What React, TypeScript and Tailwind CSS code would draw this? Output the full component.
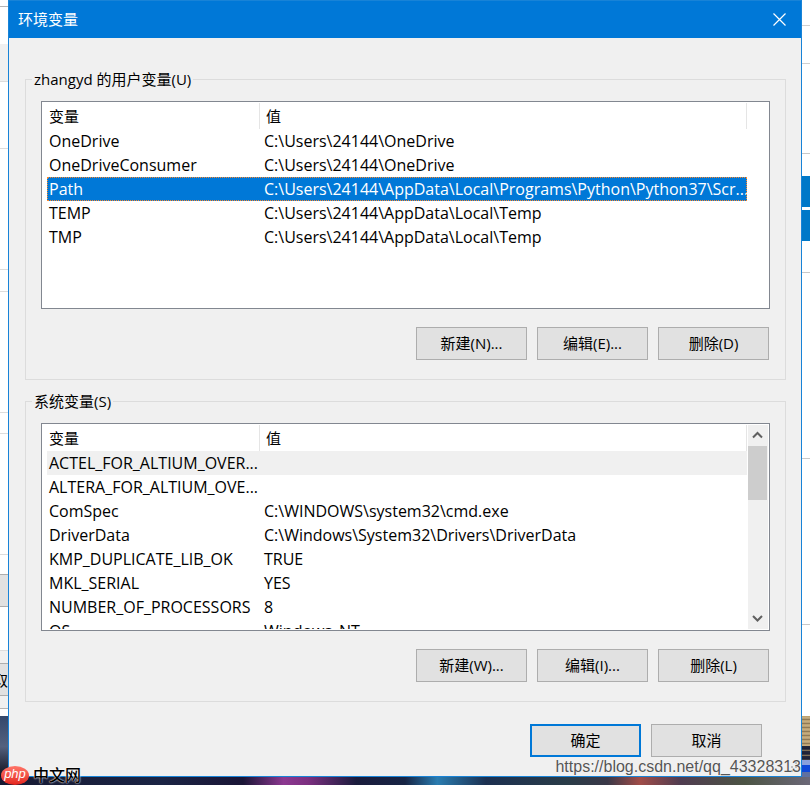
import React from 'react';

interface Variable {
  name: string;
  value: string;
}

interface VariableTableProps {
  label: string;
  variables: Variable[];
  focused?: string;
  inactive?: string;
  scrollable?: boolean;
}

const userVariables: Variable[] = [
  { name: 'OneDrive', value: 'C:\\Users\\24144\\OneDrive' },
  { name: 'OneDriveConsumer', value: 'C:\\Users\\24144\\OneDrive' },
  { name: 'Path', value: 'C:\\Users\\24144\\AppData\\Local\\Programs\\Python\\Python37\\Scr...' },
  { name: 'TEMP', value: 'C:\\Users\\24144\\AppData\\Local\\Temp' },
  { name: 'TMP', value: 'C:\\Users\\24144\\AppData\\Local\\Temp' },
];

const systemVariables: Variable[] = [
  { name: 'ACTEL_FOR_ALTIUM_OVER...', value: '' },
  { name: 'ALTERA_FOR_ALTIUM_OVE...', value: '' },
  { name: 'ComSpec', value: 'C:\\WINDOWS\\system32\\cmd.exe' },
  { name: 'DriverData', value: 'C:\\Windows\\System32\\Drivers\\DriverData' },
  { name: 'KMP_DUPLICATE_LIB_OK', value: 'TRUE' },
  { name: 'MKL_SERIAL', value: 'YES' },
  { name: 'NUMBER_OF_PROCESSORS', value: '8' },
  { name: 'OS', value: 'Windows_NT' },
];

function Scrollbar() {
  return (
    <div className="flex w-5 shrink-0 flex-col bg-[#f0f0f0]">
      <button type="button" aria-label="向上滚动" className="flex h-[21px] w-full items-center justify-center pr-px">
        <svg width="11" height="9" viewBox="0 0 11 9" fill="none" stroke="#606060" strokeWidth="2">
          <path d="M1 6.5L5.5 2L10 6.5" />
        </svg>
      </button>
      <div className="flex-1">
        <div className="h-[54px] w-[19px] bg-[#cdcdcd]" />
      </div>
      <button type="button" aria-label="向下滚动" className="flex h-[21px] w-full items-center justify-center pr-px">
        <svg width="11" height="9" viewBox="0 0 11 9" fill="none" stroke="#606060" strokeWidth="2">
          <path d="M1 2L5.5 6.5L10 2" />
        </svg>
      </button>
    </div>
  );
}

function VariableTable({ label, variables, focused, inactive, scrollable }: VariableTableProps) {
  return (
    <div className="flex h-52 border border-[#828790] bg-white py-px pl-[5px] pr-px">
      <div className="flex-1 overflow-hidden">
        <table aria-label={label} className="w-full table-fixed border-separate border-spacing-0 text-left">
          <thead>
            <tr className="h-[26px]">
              <th className="w-[213px] border-r border-[#e5e5e5] p-0 pl-0.5 font-normal">变量</th>
              <th className="border-r border-[#e5e5e5] p-0 pl-1.5 font-normal">值</th>
            </tr>
          </thead>
          <tbody className="text-base leading-6">
            {variables.map((variable) => (
              <tr
                key={variable.name}
                className={`h-6 whitespace-nowrap ${
                  variable.name === focused
                    ? 'bg-[#0078d7] text-white outline-1 -outline-offset-1 outline-dotted outline-[#ff8728]'
                    : variable.name === inactive
                      ? 'bg-[#f0f0f0]'
                      : ''
                }`}
              >
                <td className="p-0 pl-0.5">{variable.name}</td>
                <td className="p-0 pl-1">{variable.value}</td>
              </tr>
            ))}
          </tbody>
        </table>
      </div>
      {scrollable ? (
        <div className="flex pl-px">
          <Scrollbar />
        </div>
      ) : (
        <div className="w-[21px]" />
      )}
    </div>
  );
}

function DialogButton({ children, primary }: { children: React.ReactNode; primary?: boolean }) {
  return (
    <button
      type="button"
      className={`h-[33px] w-[111px] bg-[#e1e1e1] pb-0.5 ${
        primary ? 'border-2 border-[#0078d7]' : 'border border-[#adadad]'
      }`}
    >
      {children}
    </button>
  );
}

interface VariableGroupProps extends VariableTableProps {
  actions: string[];
}

function VariableGroup({ label, actions, ...table }: VariableGroupProps) {
  return (
    <fieldset className="min-w-0 border border-[#dcdcdc] px-[15px] pb-[19px]">
      <legend className="-ml-[9px] px-0.5 leading-5">{label}</legend>
      <div className="pt-3">
        <VariableTable label={label} {...table} />
      </div>
      <div className="mt-[18px] flex justify-end gap-2.5 pr-px">
        {actions.map((action) => (
          <DialogButton key={action}>{action}</DialogButton>
        ))}
      </div>
    </fieldset>
  );
}

// Slices of the window behind the dialog, top to bottom
const leftEdge = [
  'h-[6px] bg-white',
  'h-[38px] border-t border-[#b4b4b4] bg-white',
  'h-[37px] bg-[#f0f0f0]',
  'h-[67px] border-t border-[#dcdcdc] bg-white',
  'h-[121px] border-t border-[#dcdcdc] bg-white',
  'h-[22px] border-t border-[#dcdcdc] bg-white',
  'h-[121px] border-t border-[#dcdcdc] bg-white',
  'h-[21px] border-t border-[#dcdcdc] bg-white',
  'h-[121px] border-t border-[#dcdcdc] bg-white',
  'h-[20px] border-t border-[#dcdcdc] bg-white',
  'h-[33px] border-y border-[#adadad] bg-[#e1e1e1]',
  'h-[43px] bg-white',
  'h-[13px] border-t border-[#dcdcdc] bg-[#f0f0f0]',
];

const rightEdge = [
  'h-[25px] bg-white',
  'h-[38px] border-t border-[#d0d0d0] bg-white',
  'h-[90px] border-t border-[#d0d0d0] bg-white',
  'h-[23px] border-t border-[#c8c8c8] bg-white',
  'h-[31px] bg-[#0078c8]',
  'h-[3px] bg-white',
  'h-[31px] bg-[#0078c8]',
  'h-[31px] bg-white',
  'h-[186px] border-t border-[#c8c8c8] bg-white',
  'h-[166px] border-t border-[#c8c8c8] bg-white',
  'h-[92px] border-t border-[#c8c8c8] bg-white',
];

export default function App() {
  return (
    <div className="relative font-['Open_Sans','Noto_Sans_CJK_SC',sans-serif] text-[15px] leading-5 text-black">
      <div className="flex">
        <div className="flex w-2 shrink-0 flex-col overflow-hidden">
          {leftEdge.map((slice, i) => (
            <div key={i} className={slice} />
          ))}
          <div className="flex h-[33px] items-center justify-end border-y border-[#adadad] bg-[#e1e1e1]">
            <span>取</span>
          </div>
          <div className="h-[12px] bg-[#f0f0f0]" />
          <div className="h-[8px] border-t border-[#b4b4b4] bg-white" />
          <div className="flex-1 bg-linear-to-b from-[#34486c] via-[#54617e] to-[#11131f]" />
        </div>

        <div
          role="dialog"
          aria-labelledby="dialog-title"
          className="min-w-0 flex-1 border border-[#1883d7] bg-[#f0f0f0]"
        >
          <header className="flex h-[37px] items-center justify-between bg-[#0078d7] pl-[9px] pr-[15px] text-white">
            <h1 id="dialog-title" className="pb-0.5">环境变量</h1>
            <button type="button" aria-label="关闭">
              <svg width="13" height="13" viewBox="0 0 13 13" fill="none" stroke="currentColor" strokeWidth="1.2">
                <path d="M0.5 0.5L12.5 12.5M12.5 0.5L0.5 12.5" />
              </svg>
            </button>
          </header>

          <main className="pb-[19px] pl-4 pr-[15px] pt-[31px]">
            <div className="flex flex-col gap-[11px]">
              <VariableGroup
                label="zhangyd 的用户变量(U)"
                variables={userVariables}
                focused="Path"
                actions={['新建(N)...', '编辑(E)...', '删除(D)']}
              />
              <VariableGroup
                label="系统变量(S)"
                variables={systemVariables}
                inactive="ACTEL_FOR_ALTIUM_OVER..."
                scrollable
                actions={['新建(W)...', '编辑(I)...', '删除(L)']}
              />
            </div>
            <div className="mt-[22px] flex justify-end gap-2.5 pr-6">
              <DialogButton primary>确定</DialogButton>
              <DialogButton>取消</DialogButton>
            </div>
          </main>
        </div>

        <div className="flex w-2 shrink-0 flex-col">
          {rightEdge.map((slice, i) => (
            <div key={i} className={slice} />
          ))}
          <div className="h-[30px] bg-[repeating-linear-gradient(#b79c6c_0px,#c9b184_2px,#7d6845_4px)]" />
          <div className="h-[14px] bg-[repeating-linear-gradient(#25283a_0px,#1b2036_3px,#a08a62_5px)]" />
          <div className="h-[5px] bg-[#8aa0dc]" />
          <div className="h-[7px] bg-[#1048d8]" />
          <div className="flex-1 bg-[#6070a0]" />
        </div>
      </div>

      {/* desktop wallpaper below the dialog */}
      <div className="h-2 bg-[linear-gradient(to_right,#171a33_0%,#1b2444_20%,#1a1536_30%,#8c3890_35%,#7c2f80_38%,#1a1c3c_44%,#172444_50%,#2a7cb0_54%,#1c3050_60%,#2a3c48_70%,#3a3848_75%,#a04c48_79%,#503c50_84%,#4c5444_92%,#6c6878_100%)]" />

      {/* resize grip */}
      <svg className="absolute bottom-[11px] right-3" width="12" height="12" viewBox="0 0 12 12" fill="#bfbfbf">
        <path d="M9 0h2v2h-2zM5 4h2v2h-2zM9 4h2v2h-2zM1 8h2v2h-2zM5 8h2v2h-2zM9 8h2v2h-2z" />
      </svg>

      <p className="absolute bottom-2 right-[9px] font-['Liberation_Sans',sans-serif] text-base leading-5 text-[#555] [text-shadow:0_0_1px_#fff]">
        https://blog.csdn.net/qq_43328313
      </p>

      <div className="absolute bottom-0 left-px flex h-5 items-center gap-1">
        <span className="flex h-[19px] w-7 items-center justify-center rounded-[50%] bg-linear-to-b from-[#ff7468] to-[#e3201b] pb-0.5 font-['Liberation_Sans',sans-serif] text-[13px] italic leading-4 text-white">
          php
        </span>
        <span className="text-base font-medium leading-5 [text-shadow:0_0_1px_#fff,0_0_2px_#fff]">中文网</span>
      </div>
    </div>
  );
}
